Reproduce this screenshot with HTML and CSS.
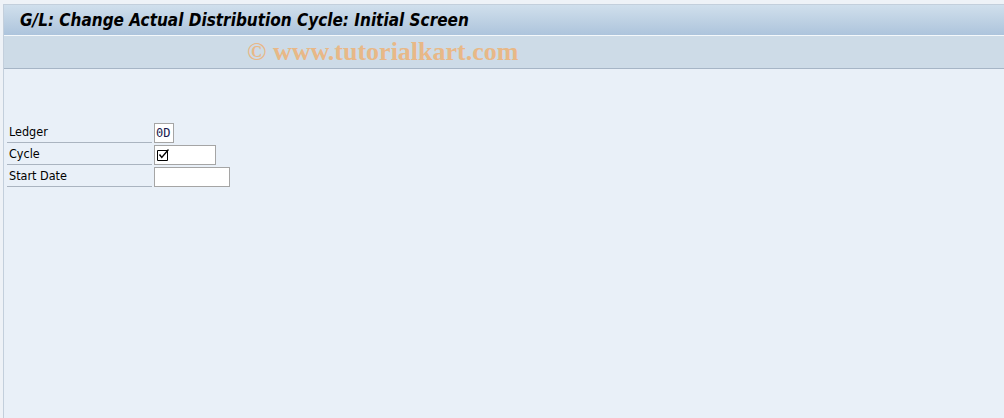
FILE: index.html
```html
<!DOCTYPE html>
<html lang="en">
<head>
	<meta charset="utf-8">
	<title>G/L: Change Actual Distribution Cycle: Initial Screen</title>
	<link rel="stylesheet" href="styles.css">
</head>
<body>
	<div class="window">
		<div class="titlebar">
			<h1 class="title">G/L: Change Actual Distribution Cycle: Initial Screen</h1>
		</div>
		<div class="toolbar">
			<span class="watermark">© www.tutorialkart.com</span>
		</div>
		<div class="content">
			<div class="form">
				<div class="row">
					<label class="label">Ledger</label>
					<div class="field field-ledger">0D</div>
				</div>
				<div class="row">
					<label class="label">Cycle</label>
					<div class="field field-cycle">
						<svg class="check" width="12" height="12" viewBox="0 0 12 12">
							<path d="M0.5 1.5 H10.5 V11.5 H0.5 Z" fill="none" stroke="#000" stroke-width="1"/>
							<path d="M2.5 5.5 L4.8 8.5 L11.5 0.5" fill="none" stroke="#000" stroke-width="1.4"/>
						</svg>
					</div>
				</div>
				<div class="row">
					<label class="label">Start Date</label>
					<div class="field field-date"></div>
				</div>
			</div>
		</div>
	</div>
</body>
</html>
```

FILE: styles.css
```css
html, body {
	margin: 0;
	padding: 0;
	height: 100%;
}

body {
	background: #eef2f7;
	font-family: "DejaVu Sans Condensed", "DejaVu Sans", sans-serif;
	overflow: hidden;
}

.window {
	margin: 4px 0 0 3px;
	height: calc(100% - 4px);
	border-top: 1px solid #c3cfdc;
	border-left: 1px solid #c3cfdc;
	display: flex;
	flex-direction: column;
	background: #e9f0f8;
}

.titlebar {
	height: 30px;
	background: linear-gradient(#d0dfec, #adc4dc);
	border-bottom: 1px solid #f4f8fb;
	display: flex;
	align-items: center;
	padding-left: 16px;
}

.title {
	margin: 0;
	font-size: 17px;
	font-weight: bold;
	font-style: italic;
	color: #000;
}

.toolbar {
	height: 32px;
	background: #cddbe7;
	border-bottom: 1px solid #a6b5c6;
	padding-left: 243px;
	display: flex;
	align-items: center;
}

.watermark {
	font-family: "Liberation Serif", serif;
	font-weight: bold;
	font-size: 26px;
	color: #e8b887;
}

.content {
	flex: 1;
	padding: 53px 0 0 3px;
}

.form {
	display: flex;
	flex-direction: column;
	gap: 1px;
}

.row {
	display: flex;
	align-items: center;
	height: 21px;
}

.label {
	width: 145px;
	height: 21px;
	box-sizing: border-box;
	border-bottom: 1px solid #aab4c0;
	padding-left: 2px;
	font-size: 12.5px;
	line-height: 20px;
	color: #000;
	margin-right: 2px;
}

.field {
	height: 20px;
	box-sizing: border-box;
	border: 1px solid #a5a5a5;
	background: #fff;
	font-family: "DejaVu Sans Mono", monospace;
	font-size: 12px;
	line-height: 18px;
	padding-left: 1px;
	color: #1a1a50;
}

.field-ledger {
	width: 20px;
}

.field-cycle {
	width: 62px;
	display: flex;
	align-items: center;
}

.field-date {
	width: 76px;
}

.check {
	display: block;
	margin-left: 1px;
}
```
